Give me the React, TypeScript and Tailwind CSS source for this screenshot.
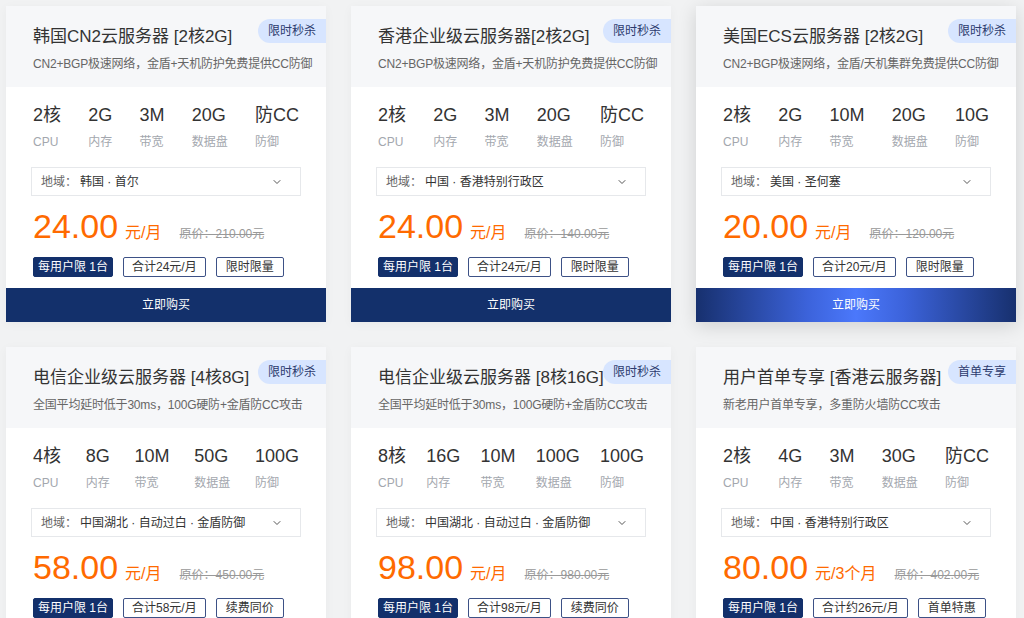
import { ChevronDown } from 'lucide-react'

type Plan = {
  title: string
  desc: string
  badge: string
  specs: [string, string][]
  region: string
  price: string
  unit: string
  original: string
  total: string
  extra: string
  active?: boolean
}

const plans: Plan[] = [
  {
    title: '韩国CN2云服务器 [2核2G]',
    desc: 'CN2+BGP极速网络，金盾+天机防护免费提供CC防御',
    badge: '限时秒杀',
    specs: [['2核', 'CPU'], ['2G', '内存'], ['3M', '带宽'], ['20G', '数据盘'], ['防CC', '防御']],
    region: '韩国 · 首尔',
    price: '24.00',
    unit: '元/月',
    original: '原价：210.00元',
    total: '合计24元/月',
    extra: '限时限量',
  },
  {
    title: '香港企业级云服务器[2核2G]',
    desc: 'CN2+BGP极速网络，金盾+天机防护免费提供CC防御',
    badge: '限时秒杀',
    specs: [['2核', 'CPU'], ['2G', '内存'], ['3M', '带宽'], ['20G', '数据盘'], ['防CC', '防御']],
    region: '中国 · 香港特别行政区',
    price: '24.00',
    unit: '元/月',
    original: '原价：140.00元',
    total: '合计24元/月',
    extra: '限时限量',
  },
  {
    title: '美国ECS云服务器 [2核2G]',
    desc: 'CN2+BGP极速网络，金盾/天机集群免费提供CC防御',
    badge: '限时秒杀',
    specs: [['2核', 'CPU'], ['2G', '内存'], ['10M', '带宽'], ['20G', '数据盘'], ['10G', '防御']],
    region: '美国 · 圣何塞',
    price: '20.00',
    unit: '元/月',
    original: '原价：120.00元',
    total: '合计20元/月',
    extra: '限时限量',
    active: true,
  },
  {
    title: '电信企业级云服务器 [4核8G]',
    desc: '全国平均延时低于30ms，100G硬防+金盾防CC攻击',
    badge: '限时秒杀',
    specs: [['4核', 'CPU'], ['8G', '内存'], ['10M', '带宽'], ['50G', '数据盘'], ['100G', '防御']],
    region: '中国湖北 · 自动过白 · 金盾防御',
    price: '58.00',
    unit: '元/月',
    original: '原价：450.00元',
    total: '合计58元/月',
    extra: '续费同价',
  },
  {
    title: '电信企业级云服务器 [8核16G]',
    desc: '全国平均延时低于30ms，100G硬防+金盾防CC攻击',
    badge: '限时秒杀',
    specs: [['8核', 'CPU'], ['16G', '内存'], ['10M', '带宽'], ['100G', '数据盘'], ['100G', '防御']],
    region: '中国湖北 · 自动过白 · 金盾防御',
    price: '98.00',
    unit: '元/月',
    original: '原价：980.00元',
    total: '合计98元/月',
    extra: '续费同价',
  },
  {
    title: '用户首单专享 [香港云服务器]',
    desc: '新老用户首单专享，多重防火墙防CC攻击',
    badge: '首单专享',
    specs: [['2核', 'CPU'], ['4G', '内存'], ['3M', '带宽'], ['30G', '数据盘'], ['防CC', '防御']],
    region: '中国 · 香港特别行政区',
    price: '80.00',
    unit: '元/3个月',
    original: '原价：402.00元',
    total: '合计约26元/月',
    extra: '首单特惠',
  },
]

function PlanCard({ plan }: { plan: Plan }) {
  return (
    <div
      className={
        'relative flex flex-col bg-white ' +
        (plan.active
          ? 'shadow-[0_4px_18px_rgba(0,0,0,0.14)]'
          : 'shadow-[0_2px_10px_rgba(0,0,0,0.04)]')
      }
    >
      <div className="h-[81px] whitespace-nowrap bg-[#f6f7f9] pl-[27px] pt-[19px]">
        <h3 className="text-[17px] leading-[24px] text-[#333]">{plan.title}</h3>
        <p className="mt-[6px] text-[12px] leading-[18px] tracking-[-0.2px] text-[#666]">{plan.desc}</p>
      </div>
      <span className="absolute right-0 top-[13px] flex h-[24px] w-[68px] items-center justify-center rounded-l-full bg-[#d7e5ff] text-[12px] text-[#2c3b6e]">
        {plan.badge}
      </span>

      <div className="px-[25px]">
        <div className="mt-[16px] flex justify-between px-[2px]">
          {plan.specs.map(([value, label], i) => (
            <div key={i} className="flex flex-col">
              <span className="text-[18px] leading-[24px] text-[#333]">{value}</span>
              <span className="mt-[7px] text-[12px] leading-[16px] text-[#a3a7ae]">{label}</span>
            </div>
          ))}
        </div>

        <div className="mt-[17px] flex h-[29px] items-center border border-[#e6e8eb] pl-[9px] pr-[17px] text-[12px]">
          <span className="text-[#666]">地域：</span>
          <span className="ml-[3px] text-[#333]">{plan.region}</span>
          <ChevronDown size={12} strokeWidth={2} className="ml-auto text-[#555]" />
        </div>

        <div className="mt-[9px] flex h-[42px] items-baseline whitespace-nowrap px-[2px]">
          <span className="text-[34px] leading-[42px] text-[#ff6a00]">{plan.price}</span>
          <span className="ml-[7px] text-[16px] text-[#ff6a00]">{plan.unit}</span>
          <span className="ml-[18px] text-[12px] text-[#999] line-through">{plan.original}</span>
        </div>

        <div className="mt-[10px] flex gap-[10px] whitespace-nowrap px-[2px] text-[12px] leading-[18px]">
          <span className="rounded-[2px] border border-[#13306b] bg-[#13306b] px-[4px] text-white">
            每用户限 1台
          </span>
          <span className="rounded-[2px] border border-[#3d5186] px-[8px] text-[#333]">{plan.total}</span>
          <span className="rounded-[2px] border border-[#3d5186] px-[9px] text-[#333]">{plan.extra}</span>
        </div>
      </div>

      <button
        className={
          'mt-[11px] h-[34px] w-full text-[12px] text-white ' +
          (plan.active
            ? 'bg-[linear-gradient(90deg,#17306e_0%,#3c63db_35%,#4b78fb_50%,#3c63db_65%,#17306e_100%)]'
            : 'bg-[#13306b]')
        }
      >
        立即购买
      </button>
    </div>
  )
}

export default function App() {
  return (
    <div
      className="h-[618px] overflow-hidden bg-[#f1f2f3] pl-[6px] pt-[6px]"
      style={{ fontFamily: '"Liberation Sans", "Noto Sans CJK SC", sans-serif' }}
    >
      <div className="grid w-[1010px] grid-cols-[320px_320px_320px] gap-x-[25px] gap-y-[25px]">
        {plans.map((plan, i) => (
          <PlanCard key={i} plan={plan} />
        ))}
      </div>
    </div>
  )
}
